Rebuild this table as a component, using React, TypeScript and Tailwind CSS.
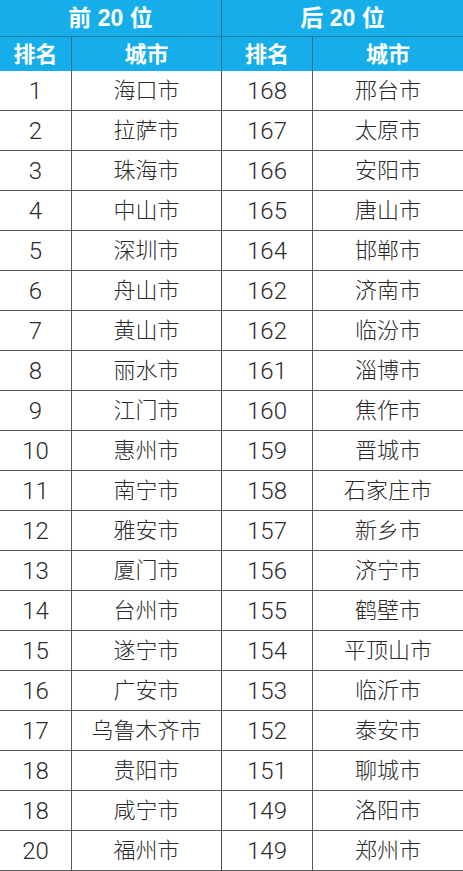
const top = [
  ['1', '海口市'], ['2', '拉萨市'], ['3', '珠海市'], ['4', '中山市'], ['5', '深圳市'],
  ['6', '舟山市'], ['7', '黄山市'], ['8', '丽水市'], ['9', '江门市'], ['10', '惠州市'],
  ['11', '南宁市'], ['12', '雅安市'], ['13', '厦门市'], ['14', '台州市'], ['15', '遂宁市'],
  ['16', '广安市'], ['17', '乌鲁木齐市'], ['18', '贵阳市'], ['18', '咸宁市'], ['20', '福州市'],
];

const bottom = [
  ['168', '邢台市'], ['167', '太原市'], ['166', '安阳市'], ['165', '唐山市'], ['164', '邯郸市'],
  ['162', '济南市'], ['162', '临汾市'], ['161', '淄博市'], ['160', '焦作市'], ['159', '晋城市'],
  ['158', '石家庄市'], ['157', '新乡市'], ['156', '济宁市'], ['155', '鹤壁市'], ['154', '平顶山市'],
  ['153', '临沂市'], ['152', '泰安市'], ['151', '聊城市'], ['149', '洛阳市'], ['149', '郑州市'],
];

// 숫자는 얇은 글꼴로
const num = 'flex items-center justify-center border-r border-[#5a5a5a] text-[24px] font-["Roboto",sans-serif] font-light';

export default function App() {
  return (
    <div
      className="w-[463px] h-[871px] overflow-hidden bg-white"
      style={{ fontFamily: '"Liberation Sans", "Noto Sans CJK SC", sans-serif' }}
    >
      {/* 표 머리 1행 */}
      <div className="grid grid-cols-[222px_241px] h-[37px] bg-[#15aeea] border-b border-[#1f7aa6] text-white font-bold text-[23px]">
        <div className="flex items-center justify-center border-r border-[#1f6f96]">前 20 位</div>
        <div className="flex items-center justify-center">后 20 位</div>
      </div>
      {/* 표 머리 2행 */}
      <div className="grid grid-cols-[72px_150px_91px_150px] h-[34px] bg-[#15aeea] text-white font-bold text-[22px]">
        <div className="flex items-center justify-center border-r border-[#2a6f90]">排名</div>
        <div className="flex items-center justify-center border-r border-[#1f6f96]">城市</div>
        <div className="flex items-center justify-center border-r border-[#2a6f90]">排名</div>
        <div className="flex items-center justify-center">城市</div>
      </div>
      {top.map((row, i) => (
        <div
          key={i}
          className="grid grid-cols-[72px_150px_91px_150px] h-[40px] border-b border-[#5a5a5a] text-[#2a2a2a] font-light"
        >
          <div className={num}>{row[0]}</div>
          <div className="flex items-center justify-center border-r border-[#4a4a4a] text-[22px]">{row[1]}</div>
          <div className={num}>{bottom[i][0]}</div>
          <div className="flex items-center justify-center text-[22px]">{bottom[i][1]}</div>
        </div>
      ))}
    </div>
  );
}
